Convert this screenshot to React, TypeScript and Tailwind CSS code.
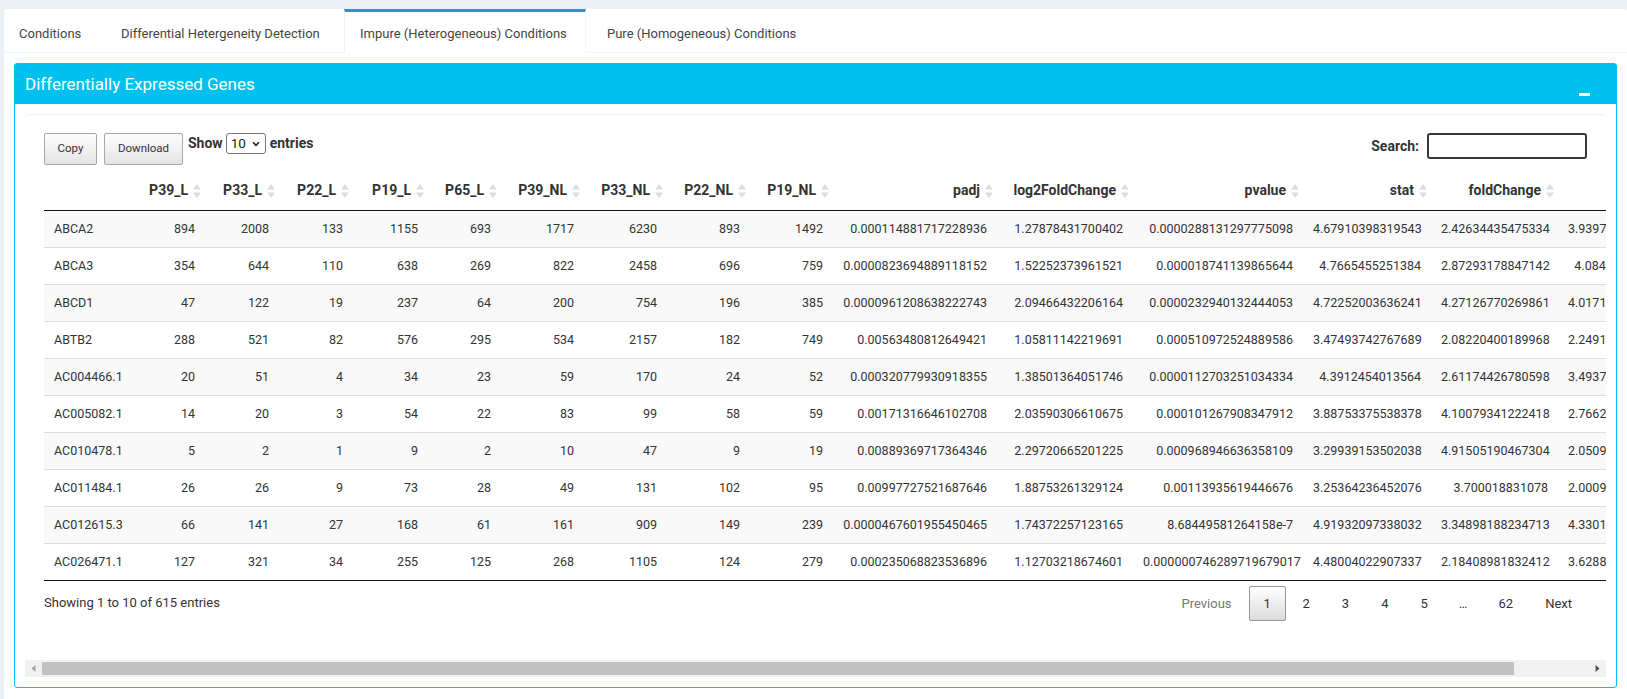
import React from "react";

type Col = { label: string; w: string };

const cols: Col[] = [
  { label: "", w: "w-[92px]" },
  { label: "P39_L", w: "w-[69px]" },
  { label: "P33_L", w: "w-[74px]" },
  { label: "P22_L", w: "w-[74px]" },
  { label: "P19_L", w: "w-[75px]" },
  { label: "P65_L", w: "w-[73px]" },
  { label: "P39_NL", w: "w-[83px]" },
  { label: "P33_NL", w: "w-[83px]" },
  { label: "P22_NL", w: "w-[83px]" },
  { label: "P19_NL", w: "w-[83px]" },
  { label: "padj", w: "w-[164px]" },
  { label: "log2FoldChange", w: "w-[136px]" },
  { label: "pvalue", w: "w-[170px]" },
  { label: "stat", w: "w-[128px]" },
  { label: "foldChange", w: "w-[127px]" },
  { label: "lfcSE", w: "w-[128px]" },
];

const rows: string[][] = [
  ["ABCA2", "894", "2008", "133", "1155", "693", "1717", "6230", "893", "1492", "0.000114881717228936", "1.27878431700402", "0.0000288131297775098", "4.67910398319543", "2.42634435475334", "3.93970231564812"],
  ["ABCA3", "354", "644", "110", "638", "269", "822", "2458", "696", "759", "0.0000823694889118152", "1.52252373961521", "0.000018741139865644", "4.7665455251384", "2.87293178847142", "4.0845312649871"],
  ["ABCD1", "47", "122", "19", "237", "64", "200", "754", "196", "385", "0.0000961208638222743", "2.09466432206164", "0.0000232940132444053", "4.72252003636241", "4.27126770269861", "4.01710358412236"],
  ["ABTB2", "288", "521", "82", "576", "295", "534", "2157", "182", "749", "0.00563480812649421", "1.05811142219691", "0.000510972524889586", "3.47493742767689", "2.08220400189968", "2.24910763152088"],
  ["AC004466.1", "20", "51", "4", "34", "23", "59", "170", "24", "52", "0.000320779930918355", "1.38501364051746", "0.0000112703251034334", "4.3912454013564", "2.61174426780598", "3.49370184526473"],
  ["AC005082.1", "14", "20", "3", "54", "22", "83", "99", "58", "59", "0.00171316646102708", "2.03590306610675", "0.000101267908347912", "3.88753375538378", "4.10079341222418", "2.76620459813374"],
  ["AC010478.1", "5", "2", "1", "9", "2", "10", "47", "9", "19", "0.00889369717364346", "2.29720665201225", "0.000968946636358109", "3.29939153502038", "4.91505190467304", "2.05090827361945"],
  ["AC011484.1", "26", "26", "9", "73", "28", "49", "131", "102", "95", "0.00997727521687646", "1.88753261329124", "0.00113935619446676", "3.25364236452076", "3.700018831078", "2.00090614827731"],
  ["AC012615.3", "66", "141", "27", "168", "61", "161", "909", "149", "239", "0.0000467601955450465", "1.74372257123165", "8.68449581264158e-7", "4.91932097338032", "3.34898188234713", "4.33010472916358"],
  ["AC026471.1", "127", "321", "34", "255", "125", "268", "1105", "124", "279", "0.000235068823536896", "1.12703218674601", "0.000000746289719679017", "4.48004022907337", "2.18408981832412", "3.62880153942716"],
];

function SortIcon() {
  return (
    <svg className="absolute right-[4px] top-[14px]" width="8" height="14" viewBox="0 0 8 14">
      <polygon points="4,0 8,5.5 0,5.5" fill="#dcdcdc" />
      <polygon points="0,8.5 8,8.5 4,14" fill="#dcdcdc" />
    </svg>
  );
}

function Tabs() {
  return (
    <div className="flex h-[44px] border-b border-[#f4f4f4]">
      <div className="w-[97px] mr-[5px] h-[43px] border-t-[3px] border-transparent flex items-center pl-[15px] pt-[3px] text-[13px] text-[#444] whitespace-nowrap">
        Conditions
      </div>
      <div className="w-[233px] mr-[5px] h-[43px] border-t-[3px] border-transparent flex items-center pl-[15px] pt-[3px] text-[13px] text-[#444] whitespace-nowrap">
        Differential Hetergeneity Detection
      </div>
      <div className="w-[242px] mr-[5px] h-[44px] border-t-[3px] border-t-[#3c8dbc] border-x border-x-[#f4f4f4] bg-white flex items-center pl-[15px] pt-[3px] pb-[1px] text-[13px] text-[#444] whitespace-nowrap relative z-10">
        Impure (Heterogeneous) Conditions
      </div>
      <div className="h-[43px] border-t-[3px] border-transparent flex items-center pl-[16px] pr-[15px] pt-[3px] text-[13px] text-[#444] whitespace-nowrap">
        Pure (Homogeneous) Conditions
      </div>
    </div>
  );
}

function Controls() {
  return (
    <div className="flex justify-between h-[32px]">
      <div className="flex items-start">
        <div className="w-[53px] h-[32px] border border-[#a8a8a8] rounded-[2px] bg-gradient-to-b from-[#fdfdfd] to-[#e4e4e4] flex items-center justify-center text-[11.5px] text-[#333]">
          Copy
        </div>
        <div className="w-[79px] h-[32px] ml-[7px] border border-[#a8a8a8] rounded-[2px] bg-gradient-to-b from-[#fdfdfd] to-[#e4e4e4] flex items-center justify-center text-[11.5px] text-[#333]">
          Download
        </div>
        <div className="flex items-center h-[21px] ml-[5px] text-[14px] font-bold text-[#333]">
          <span>Show</span>
          <div className="ml-[3px] w-[40px] h-[21px] border border-[#767676] rounded-[3px] bg-white flex items-center justify-between pl-[4px] pr-[5px]">
            <span className="text-[13.5px] font-normal text-[#222]">10</span>
            <svg width="8" height="6" viewBox="0 0 8 6">
              <path d="M1 1.2 L4 4.4 L7 1.2" stroke="#222" strokeWidth="1.6" fill="none" />
            </svg>
          </div>
          <span className="ml-[4px]">entries</span>
        </div>
      </div>
      <div className="flex items-start">
        <span className="text-[14px] font-bold text-[#333] leading-[26px] mr-[8px]">Search:</span>
        <div className="w-[160px] h-[26px] border-2 border-[#383838] rounded-[3px] bg-white" />
      </div>
    </div>
  );
}

function DataTable() {
  return (
    <table className="table-fixed border-separate border-spacing-0 w-[1642px] mt-[5px]">
      <colgroup>
        {cols.map((c, i) => (
          <col key={i} className={c.w} />
        ))}
      </colgroup>
      <thead>
        <tr>
          {cols.map((c, i) => (
            <th
              key={i}
              className={
                i === 0
                  ? "text-left py-[10px] pl-[10px] leading-[20px] border-b border-[#111] text-[14px] font-bold text-[#333]"
                  : "relative text-right py-[10px] pl-[10px] pr-[17px] leading-[20px] border-b border-[#111] text-[14px] font-bold text-[#333] whitespace-nowrap"
              }
            >
              {c.label}
              {i > 0 && <SortIcon />}
            </th>
          ))}
        </tr>
      </thead>
      <tbody>
        {rows.map((r, ri) => (
          <tr key={ri} className={ri % 2 === 0 ? "bg-[#f9f9f9]" : "bg-white"}>
            {r.map((v, ci) => (
              <td
                key={ci}
                className={
                  (ci === 0 ? "text-left " : "text-right ") +
                  (ri === rows.length - 1 ? "border-b border-[#111] " : "border-b border-[#ddd] ") +
                  "py-[8px] px-[10px] leading-[20px] text-[12.5px] text-[#333] whitespace-nowrap"
                }
              >
                {v}
              </td>
            ))}
          </tr>
        ))}
      </tbody>
    </table>
  );
}

function Pagination() {
  const btn = "h-[35px] ml-[2px] px-[14px] border border-transparent flex items-center justify-center text-[13px] text-[#333]";
  return (
    <div className="flex items-start">
      <div className={btn + " text-[#777]"}>
        <span className="text-[#777]">Previous</span>
      </div>
      <div className="h-[35px] ml-[2px] w-[37px] border border-[#979797] rounded-[2px] bg-gradient-to-b from-white to-[#dcdcdc] flex items-center justify-center text-[13px] text-[#333]">
        1
      </div>
      <div className={btn}>2</div>
      <div className={btn}>3</div>
      <div className={btn}>4</div>
      <div className={btn}>5</div>
      <div className="h-[35px] ml-[2px] px-[14px] flex items-center text-[13px] text-[#333]">…</div>
      <div className={btn}>62</div>
      <div className={btn}>Next</div>
    </div>
  );
}

function Scrollbar() {
  return (
    <div className="h-[17px] bg-[#f1f1f1] flex items-center">
      <div className="w-[17px] h-[17px] flex items-center justify-center">
        <svg width="5" height="7" viewBox="0 0 5 7">
          <polygon points="4.5,0 4.5,7 0.5,3.5" fill="#a3a3a3" />
        </svg>
      </div>
      <div className="w-[1472px] h-[13px] bg-[#c1c1c1]" />
      <div className="flex-1" />
      <div className="w-[17px] h-[17px] flex items-center justify-center">
        <svg width="5" height="7" viewBox="0 0 5 7">
          <polygon points="0.5,0 0.5,7 4.5,3.5" fill="#505050" />
        </svg>
      </div>
    </div>
  );
}

export default function App() {
  return (
    <div className="w-[1627px] h-[699px] overflow-hidden bg-[#ecf0f5] pt-[9px] pl-[4px] font-[family-name:Roboto,sans-serif] text-[#333]">
      <div className="bg-white rounded-[3px] shadow-[0_1px_1px_rgba(0,0,0,0.1)] h-[720px]">
        <Tabs />
        <div className="p-[10px]">
          <div className="border border-[#00c0ef] rounded-[3px] bg-white">
            <div className="relative h-[40px] bg-[#00c0ef] flex items-center pl-[10px]">
              <span className="text-[17px] text-white leading-none">Differentially Expressed Genes</span>
              <div className="absolute right-[26px] top-[29px] w-[11px] h-[3px] bg-white" />
            </div>
            <div className="p-[10px]">
              <div className="h-[563px] border-t border-[#f0f0f0] rounded-t-[4px] flex flex-col">
                <div className="h-[546px] overflow-hidden pt-[18px] pl-[19px]">
                  <div className="w-[1543px]">
                    <Controls />
                    <DataTable />
                    <div className="flex justify-between mt-[5px]">
                      <div className="text-[13px] leading-[33px] text-[#333]">Showing 1 to 10 of 615 entries</div>
                      <Pagination />
                    </div>
                  </div>
                </div>
                <Scrollbar />
              </div>
            </div>
          </div>
        </div>
      </div>
    </div>
  );
}
